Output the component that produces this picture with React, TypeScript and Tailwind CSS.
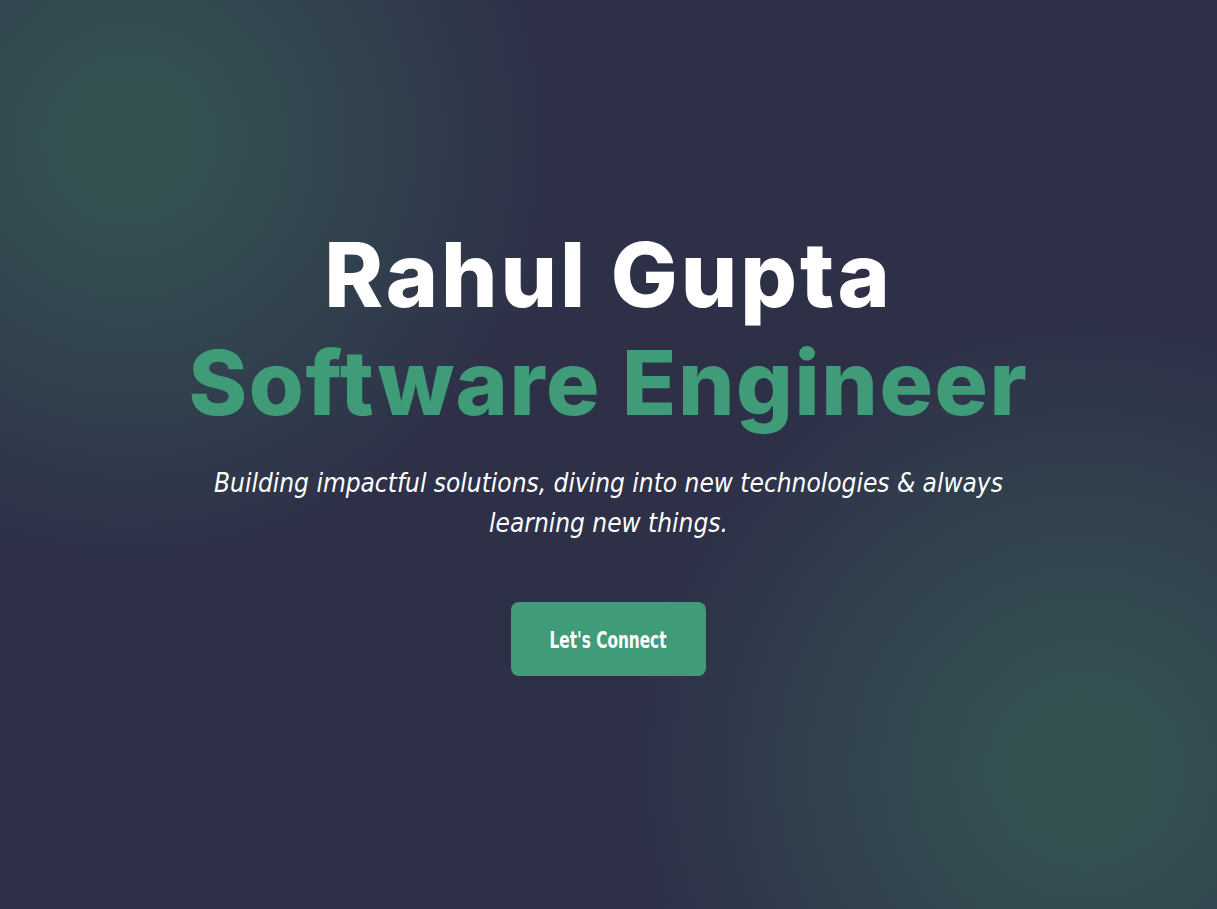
import React from "react";

export default function App() {
  return (
    <div className="min-h-screen w-full bg-[#2e3048] bg-[radial-gradient(circle_at_130px_140px,#355253_0px,#355253_60px,rgba(53,82,83,0)_430px),radial-gradient(circle_at_1085px_770px,#355253_0px,#355253_70px,rgba(53,82,83,0)_460px)] flex flex-col items-center justify-center">
      <div className="flex flex-col items-center pt-[4px]">
        <h1 className="-mt-[16px] text-center font-['Inter',sans-serif] font-extrabold text-[89px] leading-[108px] tracking-[3px] text-white">
          Rahul Gupta
        </h1>
        <h2 className="text-center font-['Inter',sans-serif] font-extrabold text-[89px] leading-[108px] tracking-[1.6px] text-[#409c78]">
          Software Engineer
        </h2>
        <p className="mt-[26px] w-[820px] text-center italic text-white text-[26px] leading-[40px] font-['DejaVu_Sans_Condensed','Liberation_Sans_Narrow','DejaVu_Sans',sans-serif]">
          Building impactful solutions, diving into new technologies &amp; always learning new things.
        </p>
        <button className="mt-[59px] w-[195px] h-[74px] rounded-[8px] bg-[#409c78] text-white font-bold text-[23px] font-['DejaVu_Sans_Condensed','DejaVu_Sans',sans-serif] flex items-center justify-center pt-[2px]">
          <span className="inline-block scale-x-[0.74] whitespace-nowrap">Let's Connect</span>
        </button>
      </div>
    </div>
  );
}
